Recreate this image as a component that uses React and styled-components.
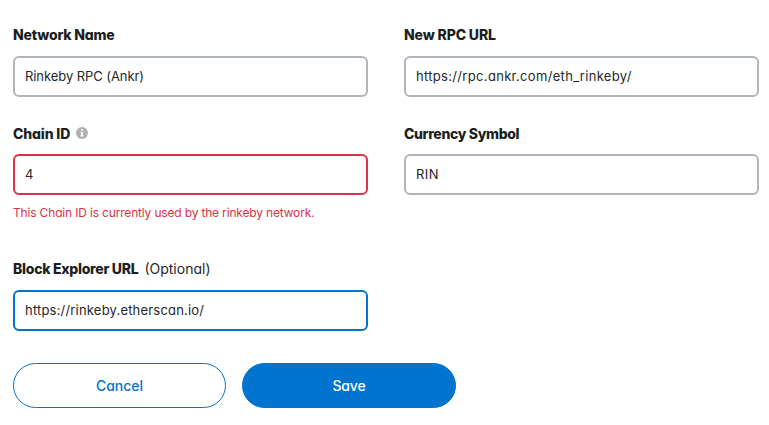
import React from "react";
import styled, { createGlobalStyle, css } from "styled-components";

const GlobalStyle = createGlobalStyle`
  *, *::before, *::after { box-sizing: border-box; }
  body {
    margin: 0;
    background: #fff;
    color: #24272a;
    font-family: Inter, "Open Sans", sans-serif;
    font-feature-settings: "cv11", "ss03";
    font-size: 13px;
  }
`;

const borders = { normal: "#b0b5bc", error: "#dc3146", focused: "#0074ce" };

const Form = styled.form`
  width: 769px;
  height: 425px;
  padding: 25px 10px 0 13px;
  overflow: hidden;
`;

const Fields = styled.div`
  display: grid;
  grid-template-columns: 355px 355px;
  column-gap: 36px;
  grid-template-rows: 98px 136px 104px;
`;

const Field = styled.div`
  display: flex;
  flex-direction: column;
`;

const Label = styled.label`
  display: flex;
  align-items: center;
  height: ${(p) => (p.$low ? 20 : 18)}px;
  margin-bottom: ${(p) => (p.$low ? 11 : 13)}px;
  white-space: pre;
`;

const LabelText = styled.span`
  color: #1c1f22;
  font-size: 14px;
  font-weight: 780;
  letter-spacing: ${(p) => p.$tracking || 0}px;
`;

const OptionalText = styled.span`
  margin-left: 6px;
  font-size: 14px;
  letter-spacing: ${(p) => p.$tracking || 0}px;
`;

const Input = styled.input`
  width: 100%;
  height: 41px;
  padding: 0 10px 2px;
  border: 2px solid ${(p) => borders[p.$state || "normal"]};
  border-radius: 6px;
  outline: none;
  background: #fff;
  color: #24272a;
  font: inherit;
  font-feature-settings: inherit;
  letter-spacing: ${(p) => p.$tracking || 0}px;
`;

const ErrorText = styled.p`
  margin: 10px 0 0;
  color: #dc3146;
  font-size: 12px;
  line-height: 16px;
  letter-spacing: ${(p) => p.$tracking || 0}px;
`;

const InfoIcon = styled.svg`
  width: 12px;
  height: 12px;
  margin: -1px 0 0 6px;
`;

const Actions = styled.div`
  display: grid;
  grid-template-columns: 213px 214px;
  column-gap: 16px;
`;

const Button = styled.button`
  height: 45px;
  padding: 0 0 1px;
  border: 1px solid #0074ce;
  border-radius: 23px;
  background: #fff;
  color: #0074ce;
  font: 500 14px Inter, sans-serif;
  font-feature-settings: inherit;
  letter-spacing: ${(p) => p.$tracking || 0}px;
  ${(p) => p.$primary && css`
    background: #0074ce;
    color: #fff;
  `}
`;

export default function App() {
  return (
    <>
      <GlobalStyle />
      <Form>
        <Fields>
          <Field>
            <Label><LabelText $tracking={-0.19}>Network Name</LabelText></Label>
            <Input readOnly $tracking={-0.07} value="Rinkeby RPC (Ankr)" />
          </Field>
          <Field>
            <Label><LabelText $tracking={-0.14}>New RPC URL</LabelText></Label>
            <Input readOnly $tracking={0.32} value="https://rpc.ankr.com/eth_rinkeby/" />
          </Field>
          <Field>
            <Label $low>
              <LabelText $tracking={-0.13}>Chain ID</LabelText>
              <InfoIcon viewBox="0 0 12 12">
                <circle cx="6" cy="6" r="6" fill="#b0b0b0" />
                <path d="M5 2.3h2v1.5H5zM4.5 5H7v3.5h.6v1H4.4v-1H5V6h-.5z" fill="#fff" />
              </InfoIcon>
            </Label>
            <Input readOnly $state="error" value="4" />
            <ErrorText $tracking={-0.17}>This Chain ID is currently used by the rinkeby network.</ErrorText>
          </Field>
          <Field>
            <Label $low><LabelText $tracking={-0.34}>Currency Symbol</LabelText></Label>
            <Input readOnly $tracking={0.5} value="RIN" />
          </Field>
          <Field>
            <Label>
              <LabelText $tracking={-0.27}>Block Explorer URL</LabelText>
              <OptionalText>(Optional)</OptionalText>
            </Label>
            <Input readOnly $tracking={0.19} $state="focused" value="https://rinkeby.etherscan.io/" />
          </Field>
        </Fields>
        <Actions>
          <Button type="button">Cancel</Button>
          <Button type="button" $primary $tracking={-0.15}>Save</Button>
        </Actions>
      </Form>
    </>
  );
}
